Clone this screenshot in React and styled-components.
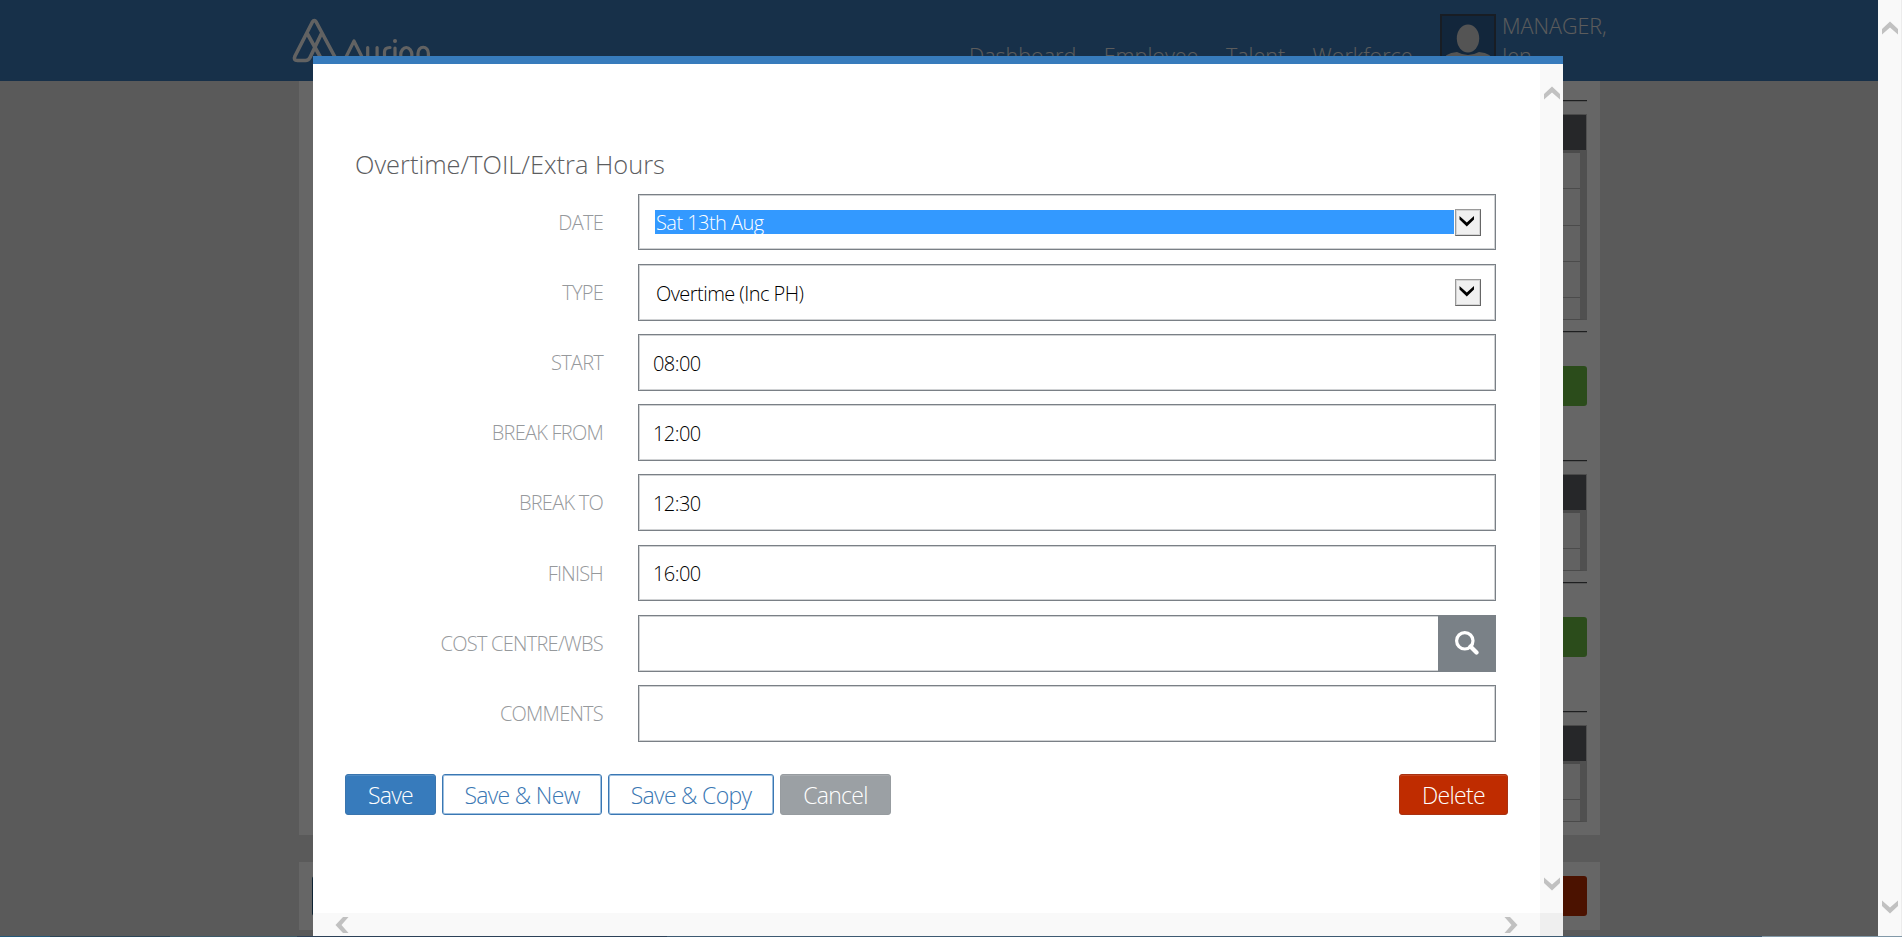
import React from "react";
import styled, { createGlobalStyle } from "styled-components";

const Global = createGlobalStyle`
  * { box-sizing: border-box; }
  html, body { margin: 0; padding: 0; height: 100%; overflow: hidden; }
  body { font-family: "Open Sans", sans-serif; font-weight: 300; background: #fff; }
`;

const Screen = styled.div`
  position: relative;
  width: 1902px;
  height: 937px;
  overflow: hidden;
  display: grid;
  grid-template-columns: 1878px 24px;
  grid-template-rows: 936px 1px;
`;

const Page = styled.div`
  position: relative;
  background: #e1e1e1;
  overflow: hidden;
`;

const Header = styled.header`
  height: 81px;
  padding-left: 291px;
  background: #3a79b7;
  display: flex;
  align-items: flex-start;
  color: #e6e6e6;
  font-size: 21.5px;
`;

const Logo = styled.svg`
  width: 150px;
  height: 81px;
  flex: none;
`;

const Nav = styled.nav`
  margin-left: 528px;
  width: 471px;
  padding-top: 42px;
  display: flex;
  line-height: 28px;
  gap: 27.5px;
`;

const NavItem = styled.span`
  white-space: nowrap;
`;

const Avatar = styled.svg`
  width: 56px;
  height: 56px;
  margin-top: 14px;
  flex: none;
`;

const UserName = styled.div`
  margin: 11px 0 0 6px;
  line-height: 30px;
  width: 120px;
`;

const Panel = styled.section`
  width: 1301px;
  height: ${(p) => p.$height}px;
  margin: 0 0 27px 299px;
  padding: ${(p) => p.$top}px 13px 0 14px;
  background: #fff;
`;

const Rule = styled.div`
  height: 2px;
  background: linear-gradient(#4c4e52 50%, #d6d6d6 50%);
  margin-bottom: ${(p) => p.$gap}px;
`;

const Grid = styled.div`
  border: 1px solid #b9b9b9;
  border-right: 7px solid #c8c8c8;
  margin-bottom: 11px;
`;

const GridHead = styled.div`
  height: 35px;
  margin-right: -6px;
  background: #5f6266;
`;

const GridRow = styled.div`
  height: ${(p) => p.$height}px;
  background: #f6f6f6;
  border-top: ${(p) => (p.$first ? 3 : 1)}px solid #bcbcbc;
`;

const PanelActions = styled.div`
  display: flex;
  justify-content: ${(p) => (p.$spread ? "space-between" : "flex-end")};
  margin-top: ${(p) => p.$top}px;
  margin-bottom: ${(p) => p.$bottom}px;
`;

const PageButton = styled.span`
  width: 110px;
  height: 40px;
  border-radius: 3px;
  background: ${(p) => p.$color};
  margin-left: ${(p) => p.$left || 0}px;
`;

const Overlay = styled.div`
  position: absolute;
  inset: 0;
  background: rgba(0, 0, 0, 0.6);
`;

const Dialog = styled.div`
  position: absolute;
  left: 313px;
  top: 56px;
  width: 1250px;
  height: 880px;
  border-top: 8px solid #377bbc;
  background: #fff;
  display: grid;
  grid-template-columns: 1227px 23px;
  grid-template-rows: 849px 23px;
`;

const Form = styled.div`
  padding: 82px 32px 0 32px;
`;

const Title = styled.h1`
  margin: 0 0 12px 10px;
  height: 36px;
  font-size: 25.4px;
  line-height: 36px;
  font-weight: 300;
  color: #5c5d5f;
`;

const Field = styled.div`
  display: grid;
  grid-template-columns: 258px 858px;
  grid-template-rows: 100%;
  column-gap: 35px;
  height: ${(p) => p.$height}px;
  margin-bottom: ${(p) => p.$gap}px;
`;

const Label = styled.label`
  text-align: right;
  font-size: 20px;
  letter-spacing: -0.75px;
  line-height: 57px;
  color: #96999c;
  white-space: nowrap;
  text-transform: uppercase;
`;

const Input = styled.div`
  display: flex;
  align-items: center;
  border: 1px solid #7a8086;
  box-shadow: inset 0 0 0 1px #d0d2d4;
  padding: ${(p) => (p.$select ? "0 14px 0 16px" : p.$search ? "0" : "1px 14px 0")};
  font-size: 20px;
  letter-spacing: -0.55px;
  color: #000;
`;

const SelectText = styled.span`
  flex: 1;
  height: 24px;
  line-height: 25px;
  padding-left: 1px;
  margin-right: 1px;
  background: ${(p) => (p.$selected ? "#3399ff" : "transparent")};
  color: ${(p) => (p.$selected ? "#fff" : "#000")};
`;

const DropButton = styled.span`
  width: 26px;
  height: 27px;
  background: #f0f0f0;
  border: 1px solid;
  border-color: #9a9a9a #666 #666 #9a9a9a;
  box-shadow: inset 0 0 0 1px #d4d4d4;
  display: flex;
  align-items: center;
  justify-content: center;
  padding: 0 2px 3px 0;
`;

const SearchButton = styled.span`
  margin: -1px -1px -1px auto;
  width: 58px;
  align-self: stretch;
  background: #7a8187;
  display: flex;
  align-items: center;
  justify-content: center;
  padding: 0 1px 1px 0;
`;

const Buttons = styled.div`
  display: flex;
  gap: 6px;
  margin-top: 32px;
`;

const Button = styled.button`
  width: ${(p) => p.$width}px;
  height: 41px;
  padding: 1px 0 0;
  border-radius: 3px;
  border: 1px solid ${(p) => p.$edge};
  background: ${(p) => p.$bg};
  color: ${(p) => p.$fg || "#fff"};
  box-shadow: ${(p) => (p.$outline ? "inset 0 0 0 1px #9dbfdf" : "inset 0 1px 0 rgba(255,255,255,.12)")};
  font: 300 23px "Open Sans", sans-serif;
  letter-spacing: -0.7px;
  white-space: nowrap;
  margin-left: ${(p) => (p.$end ? "auto" : "0")};
`;

const Bar = styled.div`
  background: #f9f9f9;
  display: flex;
  flex-direction: ${(p) => (p.$across ? "row" : "column")};
  align-items: center;
  justify-content: space-between;
  padding: ${(p) => p.$pad};
  border-right: ${(p) => (p.$page ? "1px solid #ececec" : "0")};
`;

const Corner = styled.div`
  background: #efefef;
`;

const Taskbar = styled.div`
  grid-column: 1 / -1;
  background: linear-gradient(90deg, #24597a 0 50px, #2c4658 50px 170px, #3d5a68 170px 297px, #2c4158 297px 667px, #3d5a72 667px 1762px, #8299a8 1762px);
`;

const Arrow = ({ turn }) => (
  <svg width="16" height="16" viewBox="0 0 16 16">
    <path d="M8 1.5 16 9v5.5L8 7.5l-8 7V9Z" fill="#c1c1c1" transform={`rotate(${turn} 8 8)`} />
  </svg>
);

const Drop = () => (
  <DropButton>
    <svg width="16" height="12" viewBox="0 0 16 12">
      <path d="M.5 1v3.500l7.300 7L15 4.500V1L7.800 7.600Z" fill="#000" />
    </svg>
  </DropButton>
);

const fields = [
  { label: "Date", value: "Sat 13th Aug", kind: "select", selected: true, h: 56, gap: 14 },
  { label: "Type", value: "Overtime (Inc PH)", kind: "select", h: 57, gap: 13 },
  { label: "Start", value: "08:00", h: 57, gap: 13 },
  { label: "Break from", value: "12:00", h: 57, gap: 13 },
  { label: "Break to", value: "12:30", h: 57, gap: 14 },
  { label: "Finish", value: "16:00", h: 56, gap: 14 },
  { label: "Cost centre/WBS", value: "", kind: "search", h: 57, gap: 13 },
  { label: "Comments", value: "", h: 57, gap: 0 },
];

function FieldRow({ f }) {
  return (
    <Field $height={f.h} $gap={f.gap}>
      <Label>{f.label}</Label>
      <Input $select={f.kind === "select"} $search={f.kind === "search"}>
        {f.kind === "select" ? (
          <>
            <SelectText $selected={f.selected}>{f.value}</SelectText>
            <Drop />
          </>
        ) : (
          f.value
        )}
        {f.kind === "search" && (
          <SearchButton>
            <svg width="24" height="24" viewBox="0 0 24 24" fill="none" stroke="#fff">
              <circle cx="9.8" cy="9.8" r="8.2" strokeWidth="3.2" />
              <path d="m15.5 15.5 6 6" strokeWidth="4.2" strokeLinecap="round" />
            </svg>
          </SearchButton>
        )}
      </Input>
    </Field>
  );
}

export default function App() {
  return (
    <Screen>
      <Global />
      <Page>
        <Header>
          <Logo viewBox="0 0 150 81" fill="none" stroke="#f6f6f6" strokeWidth="3.6" strokeLinecap="round" strokeLinejoin="round">
            <path d="M45 59 25.200 22q-1.900-3-3.800 0L4 56q-2 4.500 2.500 4.500h8q3 0 4.500-3L30 34.500M16.500 34 31 60" />
            <path d="m54.500 58 8.500-17 8.500 17M76.700 47.500v10q0 6 4.700 6t4.700-6v-10M93.500 63V52q0-4.500 5.500-4.500M104 48v15M127 63V53.500a5 6 0 0 1 10.400 0V63" strokeWidth="3.200" />
            <ellipse cx="115.300" cy="55" rx="5.600" ry="7.500" strokeWidth="3.200" />
            <circle cx="104" cy="41" r="2" fill="#f6f6f6" stroke="none" />
          </Logo>
          <Nav>
            <NavItem>Dashboard</NavItem>
            <NavItem>Employee</NavItem>
            <NavItem>Talent</NavItem>
            <NavItem>Workforce</NavItem>
          </Nav>
          <Avatar viewBox="0 0 56 56">
            <rect x="1" y="1" width="54" height="54" fill="#2d5f93" stroke="#3c4a5a" strokeWidth="2" />
            <ellipse cx="28" cy="24.500" rx="11.200" ry="14" fill="#d2d2d2" />
            <path d="M2 54V48q2-9 15-10 11 6 22 0 13 1 15 10v6Z" fill="#d2d2d2" />
          </Avatar>
          <UserName>MANAGER, Jen</UserName>
        </Header>
        <Panel $height={754} $top={19}>
          <Rule $gap={12} />
          <Grid>
            <GridHead />
            <GridRow $first $height={38} />
            <GridRow $height={37} />
            <GridRow $height={36} />
            <GridRow $height={36} />
            <GridRow $height={22} />
          </Grid>
          <Rule $gap={0} />
          <PanelActions $top={33} $bottom={54}>
            <PageButton $color="#6dbf45" />
          </PanelActions>
          <Rule $gap={12} />
          <Grid>
            <GridHead />
            <GridRow $first $height={38} />
            <GridRow $height={22} />
          </Grid>
          <Rule $gap={0} />
          <PanelActions $top={33} $bottom={54}>
            <PageButton $color="#6dbf45" />
          </PanelActions>
          <Rule $gap={12} />
          <Grid>
            <GridHead />
            <GridRow $first $height={38} />
            <GridRow $height={22} />
          </Grid>
        </Panel>
        <Panel $height={68} $top={14}>
          <PanelActions $spread $top={0} $bottom={0}>
            <PageButton $color="#24597f" $left={-1} />
            <PageButton $color="#bb2d00" />
          </PanelActions>
        </Panel>
        <Overlay />
        <Dialog>
          <Form>
            <Title>Overtime/TOIL/Extra Hours</Title>
            {fields.map((f) => (
              <FieldRow key={f.label} f={f} />
            ))}
            <Buttons>
              <Button $width={91} $bg="#377bbc" $edge="#3a75ae">Save</Button>
              <Button $width={160} $bg="#fff" $edge="#3a77b3" $fg="#3a77b3" $outline>Save &amp; New</Button>
              <Button $width={166} $bg="#fff" $edge="#3a77b3" $fg="#3a77b3" $outline>Save &amp; Copy</Button>
              <Button $width={111} $bg="#9ba0a4" $edge="#979ca0">Cancel</Button>
              <Button $width={109} $bg="#bf2c00" $edge="#a93212" $end>Delete</Button>
            </Buttons>
          </Form>
          <Bar $pad="21px 0">
            <Arrow turn={0} />
            <Arrow turn={180} />
          </Bar>
          <Bar $across $pad="0 21px">
            <Arrow turn={-90} />
            <Arrow turn={90} />
          </Bar>
          <Corner />
        </Dialog>
      </Page>
      <Bar $page $pad="20px 0 21px">
        <Arrow turn={0} />
        <Arrow turn={180} />
      </Bar>
      <Taskbar />
    </Screen>
  );
}
